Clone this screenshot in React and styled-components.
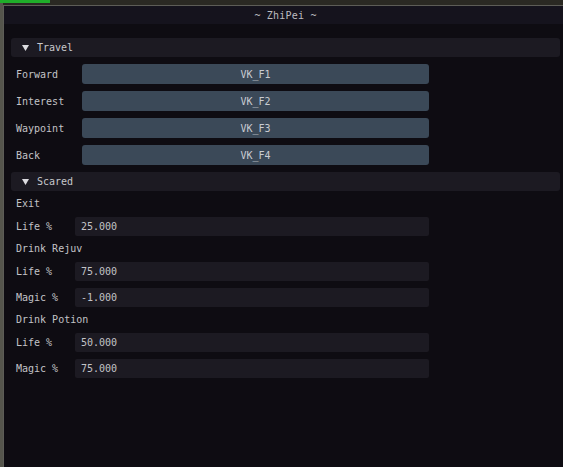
import React from "react"
import styled, { createGlobalStyle } from "styled-components";

const Global = createGlobalStyle`
  html, body {
    margin: 0;
    padding: 0;
    background: #2a2923;
    overflow: hidden;
  }
  body {
    font-family: "DejaVu Sans Mono", "Liberation Mono", monospace;
    font-size: 10px;
    color: #c3c3c7;
  }
`

const Scene = styled.div`
  position: relative;
  width: 563px;
  height: 467px;
  background: linear-gradient(90deg, #55554c 0px, #55554c 3px, #2a2923 3px);
  overflow: hidden;
`

const StatusBar = styled.div`
  position: absolute;
  left: 0;
  top: 0;
  width: 50px;
  height: 3px;
  background: #1fae2a;
`

const Window = styled.div`
  box-sizing: border-box;
  margin: 5px 0 0 3px;
  width: 564px;
  height: 470px;
  border: 1px solid #5d5d57;
  border-right: none;
  background: #0e0c12;
  display: flex;
  flex-direction: column;
`

const TitleBar = styled.div`
  height: 18px;
  background: #15131d;
  display: flex;
  align-items: center;
  justify-content: center;
  color: #bcbcc0;
  letter-spacing: 0.2px;
`

const Body = styled.div`
  padding: 14px 7px 0 7px;
  display: flex;
  flex-direction: column;
  gap: 7px;
`

const Header = styled.div`
  height: 19px;
  border-radius: 3px;
  background: #1c1a22;
  display: flex;
  align-items: center;
  gap: 8px;
  padding-left: 11px;
  color: #c8c8cc;
`

const Caret = () => (
  <svg width="7" height="6" viewBox="0 0 7 6">
    <polygon points="0,0 7,0 3.5,6" fill="#dcdce0" />
  </svg>
)

const Row = styled.div`
  display: flex;
  align-items: center;
  padding-left: 5px;
  height: ${p => p.$h || 19}px;
`

const Label = styled.div`
  width: ${p => p.$w}px;
  flex: none;
  white-space: nowrap;
`

const KeyButton = styled.div`
  width: 347px;
  height: 20px;
  border-radius: 3px;
  background: #3b4958;
  display: flex;
  align-items: center;
  justify-content: center;
  color: #c9ccd2;
`

const NumberField = styled.div`
  box-sizing: border-box;
  width: 354px;
  height: 19px;
  border-radius: 2px;
  background: #1c1a22;
  display: flex;
  align-items: center;
  padding-left: 6px;
  color: #c3c3c7;
`

const SubTitle = styled.div`
  height: 12px;
  line-height: 12px;
  padding-left: 5px;
`

const keys = [
  { name: "Forward", key: "VK_F1" },
  { name: "Interest", key: "VK_F2" },
  { name: "Waypoint", key: "VK_F3" },
  { name: "Back", key: "VK_F4" },
]

const scared = [
  { title: "Exit", fields: [{ name: "Life %", value: "25.000" }] },
  { title: "Drink Rejuv", fields: [{ name: "Life %", value: "75.000" }, { name: "Magic %", value: "-1.000" }] },
  { title: "Drink Potion", fields: [{ name: "Life %", value: "50.000" }, { name: "Magic %", value: "75.000" }] },
]

const App = () => {
  return (
    <Scene>
      <Global />
      <StatusBar />
      <Window>
        <TitleBar>~ ZhiPei ~</TitleBar>
        <Body>
          <Header><Caret />Travel</Header>
          {keys.map(k => (
            <Row key={k.name} $h={20}>
              <Label $w={66}>{k.name}</Label>
              <KeyButton>{k.key}</KeyButton>
            </Row>
          ))}
          <Header><Caret />Scared</Header>
          {scared.map(group => (
            <React.Fragment key={group.title}>
              <SubTitle>{group.title}</SubTitle>
              {group.fields.map(f => (
                <Row key={f.name}>
                  <Label $w={59}>{f.name}</Label>
                  <NumberField>{f.value}</NumberField>
                </Row>
              ))}
            </React.Fragment>
          ))}
        </Body>
      </Window>
    </Scene>
  );
};

export default App
